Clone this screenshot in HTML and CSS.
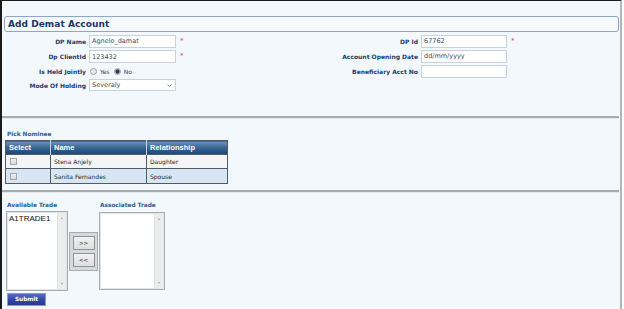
FILE: index.html
```html
<!DOCTYPE html>
<html>
<head>
<meta charset="utf-8">
<link rel="stylesheet" href="styles.css">
</head>
<body>
<div class="page">
  <div class="title-box"><span class="title">Add Demat Account</span></div>

  <div class="form">
    <div class="grid grid-left">
      <label class="lbl">DP Name</label>
      <div class="field">Agnelo_damat</div>
      <span class="star">*</span>

      <label class="lbl">Dp ClientId</label>
      <div class="field">123432</div>
      <span class="star">*</span>

      <label class="lbl">Is Held Jointly</label>
      <div class="radios">
        <span class="radio"></span><span class="rtext">Yes</span>
        <span class="radio on"></span><span class="rtext">No</span>
      </div>

      <label class="lbl">Mode Of Holding</label>
      <div class="field select">Severaly
        <svg class="chev" width="5" height="3" viewBox="0 0 5 3"><path d="M0.5 0.5 L2.5 2.5 L4.5 0.5" fill="none" stroke="#777" stroke-width="0.8"/></svg>
      </div>
      <span></span>
    </div>

    <div class="grid grid-right">
      <label class="lbl">DP Id</label>
      <div class="field">67762</div>
      <span class="star">*</span>

      <label class="lbl">Account Opening Date</label>
      <div class="field">dd/mm/yyyy</div>
      <span></span>

      <label class="lbl">Beneficiary Acct No</label>
      <div class="field"></div>
      <span></span>
    </div>
  </div>

  <div class="sep sep1"></div>

  <div class="section-label nominee">Pick Nominee</div>
  <table class="grid-table">
    <thead>
      <tr><th class="c1">Select</th><th class="c2">Name</th><th class="c3">Relationship</th></tr>
    </thead>
    <tbody>
      <tr class="r1"><td><span class="chk"></span></td><td>Stena Anjely</td><td>Daughter</td></tr>
      <tr class="r2"><td><span class="chk"></span></td><td>Sanita Fernandes</td><td>Spouse</td></tr>
    </tbody>
  </table>

  <div class="sep sep2"></div>

  <div class="trade">
    <div class="tcol">
      <div class="section-label">Available Trade</div>
      <div class="listbox lb1">
        <div class="items">A1TRADE1</div>
        <div class="sbar"><span class="up"></span><span class="down"></span></div>
      </div>
      <button class="submit">Submit</button>
    </div>
    <div class="movers">
      <button class="mv">&gt;&gt;</button>
      <button class="mv">&lt;&lt;</button>
    </div>
    <div class="tcol">
      <div class="section-label">Associated Trade</div>
      <div class="listbox lb2">
        <div class="items"></div>
        <div class="sbar"><span class="up"></span><span class="down"></span></div>
      </div>
    </div>
  </div>
</div>
</body>
</html>
```

FILE: styles.css
```css
* { box-sizing: border-box; }
html, body { margin: 0; padding: 0; background: #ffffff; }

.page {
  width: 622px;
  height: 309px;
  border-top: 1px solid #1a1a1a;
  border-left: 2px solid #1a1a1a;
  border-right: 2px solid #b3b7ba;
  background: #f3f8fc;
  font-family: "DejaVu Sans", Verdana, sans-serif;
  overflow: hidden;
}

.title-box {
  margin: 15px 1px 0 2px;
  height: 16px;
  border: 1px solid #8ea7c2;
  border-radius: 3px;
  background: #f5f9fd;
  padding-left: 3px;
  display: flex;
  align-items: center;
}
.title {
  font-weight: bold;
  font-size: 9px;
  color: #1b3567;
  letter-spacing: 0.05px;
}

.form {
  display: flex;
  margin-top: 1px;
}
.grid {
  display: grid;
  column-gap: 3px;
  align-items: center;
}
.grid-left {
  width: 298px;
  grid-template-columns: 84px 87px auto;
  grid-template-rows: 16px 15px 14px 14px;
}
.grid-right {
  grid-template-columns: 118px 86px auto;
  grid-template-rows: 16px 14px 16px;
  align-content: start;
}
.lbl {
  font-weight: bold;
  font-size: 6px;
  color: #1d3b6a;
  text-align: right;
  white-space: nowrap;
}
.field {
  height: 13px;
  background: #ffffff;
  border: 1px solid #c9d2dc;
  font-size: 6.5px;
  color: #3d4a58;
  padding-left: 2px;
  display: flex;
  align-items: center;
  white-space: nowrap;
}
.grid-left .field.select { height: 12px; justify-content: space-between; padding-right: 3px; }
.chev { display: block; }
.star {
  color: #e0406a;
  font-size: 7px;
  padding-left: 1px;
  line-height: 7px;
  align-self: center;
}

.radios {
  display: flex;
  align-items: center;
  grid-column: 2 / 4;
  padding-left: 1px;
}
.radio {
  width: 7px;
  height: 7px;
  border-radius: 50%;
  border: 1px solid #9aa0a6;
  background: #e9ecef;
  display: inline-block;
}
.radio.on {
  background: radial-gradient(circle, #2f3a48 0 1.6px, #8b97a4 2.2px, #e1e5e9 2.6px);
}
.rtext {
  font-size: 6px;
  color: #2b3d55;
  margin-left: 3px;
  margin-right: 4px;
}

.sep {
  height: 3px;
  background: #a7acaf;
  margin-right: 1px;
  border-bottom: 1px solid #e4e8eb;
  background-clip: padding-box;
}
.sep1 { margin-top: 24px; }

.section-label {
  font-weight: bold;
  font-size: 5.8px;
  color: #2a5b93;
  height: 10px;
  line-height: 10px;
  white-space: nowrap;
}
.nominee { margin: 10px 0 1px 5px; }

.grid-table {
  margin-left: 3px;
  border-collapse: collapse;
  width: 223px;
  border: 1px solid #555a60;
}
.grid-table th {
  height: 14px;
  padding: 0 0 0 3px;
  text-align: left;
  font-family: "Liberation Sans", Arial, sans-serif;
  font-weight: bold;
  font-size: 7.5px;
  color: #ffffff;
  background: linear-gradient(#6e96bd, #3a6794 45%, #1c4675);
  border-left: 1px solid #c9d5e1;
}
.grid-table th.c1 { width: 45px; border-left: none; }
.grid-table th.c2 { width: 96px; }
.grid-table td {
  padding: 0 0 0 3px;
  font-size: 6px;
  color: #1e1e1e;
  border: 1px solid #555a60;
  white-space: nowrap;
}
.grid-table tr.r1 td { height: 14px; background: #f3f5f7; }
.grid-table tr.r2 td { height: 15px; background: #d6e6f3; }
.chk {
  display: block;
  width: 7px;
  height: 7px;
  margin-left: 1px;
  border: 1px solid #a5a8ab;
  background: linear-gradient(#f0f0f0, #d9dbdd);
}

.sep2 { margin-top: 6px; }

.trade {
  display: flex;
  align-items: flex-start;
  margin-top: 7px;
  padding-left: 4px;
}
.tcol { display: flex; flex-direction: column; }
.tcol .section-label { padding-left: 1px; }
.listbox {
  display: flex;
  background: #ffffff;
  border: 1px solid #a9abad;
  box-shadow: inset 0 0 0 1px #e3e5e7;
  padding: 1px;
}
.lb1 { width: 62px; height: 80px; margin-top: 1px; }
.lb2 { width: 66px; height: 78px; margin-top: 2px; }
.items {
  flex: 1;
  font-family: "Liberation Sans", Arial, sans-serif;
  font-size: 8px;
  color: #111;
  padding: 1px 0 0 1px;
  line-height: 9px;
}
.sbar {
  width: 9px;
  background: #ebeced;
  border-left: 1px solid #dfe1e3;
  display: flex;
  flex-direction: column;
  justify-content: space-between;
  align-items: center;
  padding: 4px 0;
}
.up, .down {
  width: 0; height: 0;
  border-left: 1.5px solid transparent;
  border-right: 1.5px solid transparent;
}
.up { border-bottom: 2px solid #9c9fa2; }
.down { border-top: 2px solid #9c9fa2; }

.movers {
  margin: 32px 1px 0 1px;
  width: 29px;
  height: 39px;
  border: 1px solid #a9abad;
  background: #d6d8da;
  display: flex;
  flex-direction: column;
  align-items: center;
  gap: 3px;
  padding-top: 3px;
}
.mv {
  width: 22px;
  height: 14px;
  padding: 0;
  border: 1px solid #8f9296;
  background: linear-gradient(#f1f2f3, #dcdee0);
  font-family: "DejaVu Sans", Verdana, sans-serif;
  font-size: 5.5px;
  color: #333;
  line-height: 12px;
}

.submit {
  margin-top: 2px;
  margin-left: 1px;
  width: 39px;
  height: 13px;
  padding: 0;
  border: 1px solid #8b97d6;
  background: linear-gradient(#5669c8, #3445a6 55%, #27378f);
  color: #ffffff;
  font-family: "DejaVu Sans", Verdana, sans-serif;
  font-weight: bold;
  font-size: 5.8px;
  line-height: 11px;
}
```
